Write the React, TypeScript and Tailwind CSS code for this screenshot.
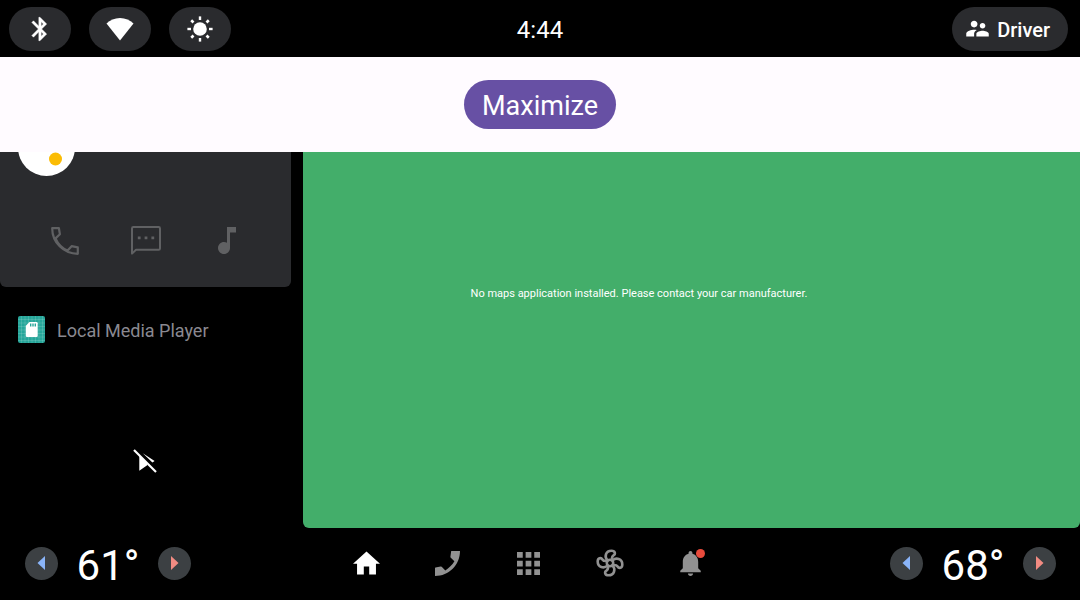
import type { ReactNode } from "react";

function StatusPill({ label, children }: { label: string; children: ReactNode }) {
  return (
    <button
      type="button"
      aria-label={label}
      className="flex h-11 w-[62px] items-center justify-center rounded-full bg-[#2a2b2e] pr-px"
    >
      {children}
    </button>
  );
}

function BluetoothIcon() {
  return (
    <svg viewBox="0 0 24 24" className="size-7" fill="currentColor" stroke="currentColor" strokeWidth=".4" aria-hidden="true">
      <path d="M17.71 7.71L12 2h-1v7.59L6.41 5 5 6.41 10.59 12 5 17.59 6.41 19 11 14.41V22h1l5.71-5.71-4.3-4.29 4.3-4.29zM13 5.83l1.88 1.88L13 9.59V5.83zm1.88 10.46L13 18.17v-3.76l1.88 1.88z" />
    </svg>
  );
}

function WifiIcon() {
  return (
    <svg viewBox="0 0 28 24" className="h-6 w-7" fill="currentColor" aria-hidden="true">
      <path d="M14 23.4 0.5 6.6C4 3.2 8.6 1 14 1s10 2.2 13.5 5.6z" />
    </svg>
  );
}

function SunIcon() {
  return (
    <svg viewBox="-14 -14 28 28" className="size-7" fill="currentColor" aria-hidden="true">
      <circle r="6.8" />
      {[0, 90, 180, 270].map((a) => (
        <rect key={a} x="-1.2" y="-12.6" width="2.4" height="3.6" transform={`rotate(${a})`} />
      ))}
      {[45, 135, 225, 315].map((a) => (
        <rect key={a} x="-1.3" y="-12.4" width="2.6" height="3.2" transform={`rotate(${a})`} />
      ))}
    </svg>
  );
}

function UsersIcon() {
  return (
    <svg viewBox="0 0 24 24" className="size-[27px]" fill="currentColor" aria-hidden="true">
      <path d="M16.5 12c1.38 0 2.49-1.12 2.49-2.5S17.88 7 16.5 7C15.12 7 14 8.12 14 9.5s1.12 2.5 2.5 2.5zM9 11c1.66 0 2.99-1.34 2.99-3S10.66 5 9 5C7.34 5 6 6.34 6 8s1.34 3 3 3zm7.5 3c-1.83 0-5.5.92-5.5 2.75V19h11v-2.25c0-1.83-3.67-2.75-5.5-2.75zM9 13c-2.33 0-7 1.17-7 3.5V19h7v-2.25c0-.85.33-2.34 2.37-3.47C10.5 13.1 9.66 13 9 13z" />
    </svg>
  );
}

function CallOutlineIcon() {
  return (
    <svg viewBox="0 0 28 28" className="size-7" fill="none" stroke="currentColor" strokeWidth="2.2" aria-hidden="true">
      <path strokeLinejoin="round" d="M1.2 1.2H7.9L8.9 7.2 4.5 11.4C7 17 11 21.2 16.6 23.6L20.6 19.2 26.800 20.4V26.800C12.6 26.800 1.2 15.4 1.2 1.2Z" />
    </svg>
  );
}

function MessageIcon() {
  return (
    <svg viewBox="0 0 30 30" className="size-[30px]" fill="none" stroke="currentColor" strokeWidth="2" aria-hidden="true">
      <path strokeLinejoin="round" d="M1 27.6V2.4Q1 1 2.4 1H27.6Q29 1 29 2.4V22.4Q29 23.8 27.6 23.8H5Z" />
      <path stroke="none" fill="currentColor" d="M6.8 10.4h2.8v2.8H6.8zM13.6 10.4h2.8v2.8h-2.8zM20.4 10.4h2.8v2.8h-2.8z" />
    </svg>
  );
}

function NoteIcon() {
  return (
    <svg viewBox="6 3 12 18" className="h-[27px] w-[18px]" fill="currentColor" aria-hidden="true">
      <path d="M12 3v10.55c-.59-.34-1.27-.55-2-.55-2.21 0-4 1.79-4 4s1.79 4 4 4 4-1.79 4-4V6.600h4V3h-6z" />
    </svg>
  );
}

function SdCardIcon() {
  return (
    <svg viewBox="0 0 27 27" className="size-[27px]" aria-hidden="true">
      <rect width="27" height="27" rx="2" fill="#26a69a" />
      <path
        d="M3.500 0v27M7 0v27M10.500 0v27M14 0v27M17.500 0v27M21 0v27M24.500 0v27M0 3.500h27M0 7h27M0 10.500h27M0 14h27M0 17.500h27M0 21h27M0 24.500h27"
        stroke="#fff"
        strokeOpacity=".2"
        strokeWidth=".7"
      />
      <path d="M11.500 6H18.500Q19.700 6 19.700 7.200V19.800Q19.700 21 18.500 21H9Q7.800 21 7.800 19.800V9.800Z" fill="#fff" />
      <path d="M12 7.400h1.400v3H12zM14.300 7.400h1.400v3h-1.400zM16.600 7.400H18v3h-1.400z" fill="#26a69a" />
    </svg>
  );
}

function PlayOffIcon() {
  return (
    <svg viewBox="0 0 24 24" className="size-6" fill="currentColor" aria-hidden="true">
      <path d="M6.300 7V21.800L14.200 16.200V14.500L6.300 6.600zM9.800 4.200 21.600 12 19.400 13.600Z" />
      <path d="M1 1 23 23" stroke="currentColor" strokeWidth="2.200" />
    </svg>
  );
}

function HomeIcon() {
  return (
    <svg viewBox="2 3 20 17" className="h-6 w-[27px]" fill="currentColor" aria-hidden="true">
      <path d="M10 20v-6h4v6h5v-8h3L12 3 2 12h3v8z" />
    </svg>
  );
}

function PhoneIcon() {
  return (
    <svg viewBox="0 0 25 25" className="size-[25px]" fill="currentColor" aria-hidden="true">
      <path d="M16.200 0H25C25 14 14 25 0 25V17Q0 16.600.5 16.400L5.600 15.400Q6.200 15.300 6.700 15.800L10.300 19.400C14 17.200 17.200 14 19.400 10.300L15.800 6.800Q15.300 6.300 15.400 5.700Z" />
    </svg>
  );
}

function AppsIcon() {
  return (
    <svg viewBox="4 4 16 16" className="size-[23px]" fill="currentColor" aria-hidden="true">
      <path d="M4 8h4V4H4v4zm6 12h4v-4h-4v4zm-6 0h4v-4H4v4zm0-6h4v-4H4v4zm6 0h4v-4h-4v4zm6-10v4h4V4h-4zm-6 4h4V4h-4v4zm6 6h4v-4h-4v4zm0 6h4v-4h-4v4z" />
    </svg>
  );
}

function FanIcon() {
  return (
    <svg viewBox="-14 -14 28 28" className="size-7" fill="none" stroke="currentColor" strokeWidth="2.600" aria-hidden="true">
      <circle r="3.200" />
      {[0, 90, 180, 270].map((a) => (
        <path
          key={a}
          transform={`rotate(${a})`}
          d="M-2.600 -2.600C-5.800 -6 -4.500 -12.300 1.500 -12.300C5.500 -12.300 5.600 -8.800 3.500 -7.600C1.800 -6.600 1.800 -5 2 -2.800"
        />
      ))}
    </svg>
  );
}

function BellIcon() {
  return (
    <svg viewBox="4 2.500 16 19.500" className="h-[25px] w-[21px]" fill="currentColor" aria-hidden="true">
      <path d="M12 22c1.100 0 2-.9 2-2h-4c0 1.100.89 2 2 2zm6-6v-5c0-3.070-1.640-5.640-4.500-6.320V4c0-.83-.67-1.500-1.500-1.500s-1.500.67-1.500 1.500v.68C7.630 5.360 6 7.920 6 11v5l-2 2v1h16v-1l-2-2z" />
    </svg>
  );
}

function TemperatureControl({ zone, value }: { zone: string; value: number }) {
  return (
    <div className="flex items-center" role="group" aria-label={`${zone} temperature`}>
      <button
        type="button"
        aria-label={`Lower ${zone} temperature`}
        className="flex size-[33px] items-center justify-center rounded-full bg-[#3c4043] pr-0.5 text-[#8ab4f8]"
      >
        <svg viewBox="0 0 8 14" className="h-3.5 w-2" fill="currentColor" aria-hidden="true">
          <path d="M8 0v14L.5 7z" />
        </svg>
      </button>
      <output className="w-[100px] pt-1.5 text-center text-[42px] leading-[50px]">{value}°</output>
      <button
        type="button"
        aria-label={`Raise ${zone} temperature`}
        className="flex size-[33px] items-center justify-center rounded-full bg-[#3c4043] text-[#f28b82]"
      >
        <svg viewBox="0 0 8 14" className="h-3.5 w-2" fill="currentColor" aria-hidden="true">
          <path d="M0 0v14l7.500-7z" />
        </svg>
      </button>
    </div>
  );
}

function NavButton({ label, active = false, children }: { label: string; active?: boolean; children: ReactNode }) {
  return (
    <button
      type="button"
      aria-label={label}
      className={`flex h-12 w-[81px] items-center justify-center ${active ? "text-white" : "text-[#919191]"}`}
    >
      {children}
    </button>
  );
}

export default function App() {
  return (
    <div className="flex min-h-screen flex-col bg-black font-['Roboto',sans-serif] text-white">
      <header className="grid h-[57px] grid-cols-[1fr_auto_1fr] items-center pr-3 pl-[9px]">
        <div className="flex gap-[18px]">
          <StatusPill label="Bluetooth"><BluetoothIcon /></StatusPill>
          <StatusPill label="Wi-Fi"><WifiIcon /></StatusPill>
          <StatusPill label="Brightness"><SunIcon /></StatusPill>
        </div>
        <time className="pt-0.5 pl-[3px] text-2xl">4:44</time>
        <button
          type="button"
          className="flex h-11 items-center gap-1.5 justify-self-end rounded-full bg-[#2a2b2e] pr-[18px] pl-3 text-xl font-medium"
        >
          <UsersIcon />
          <span className="pt-0.5">Driver</span>
        </button>
      </header>

      <section className="flex h-[95px] items-center justify-center bg-[#fffbff]">
        <button type="button" className="rounded-full bg-[#6750a4] px-[18px] pt-2 pb-1 text-[27px] leading-[37px]">
          Maximize
        </button>
      </section>

      <main className="flex flex-1 gap-3">
        <div className="flex w-[291px] shrink-0 flex-col gap-3">
          <section className="h-[135px] overflow-hidden rounded-b-md bg-[#2a2b2e]">
            <svg viewBox="0 0 57 24" className="ml-[18px] h-6 w-[57px]" aria-hidden="true">
              <circle cx="28.500" cy="-4.500" r="28.500" fill="#fff" />
              <circle cx="37.500" cy="7" r="6.500" fill="#fbbc04" />
            </svg>
            <div className="mt-[47px] flex justify-between px-6 text-[#606163]">
              <button type="button" aria-label="Call" className="flex h-9 w-[81px] items-center justify-center"><CallOutlineIcon /></button>
              <button type="button" aria-label="Message" className="flex h-9 w-[81px] items-center justify-center"><MessageIcon /></button>
              <button type="button" aria-label="Music" className="flex h-9 w-[81px] items-center justify-center pb-px"><NoteIcon /></button>
            </div>
          </section>
          <section className="flex flex-1 flex-col pt-[17px]">
            <div className="flex items-center gap-3 pl-[18px]">
              <SdCardIcon />
              <h2 className="pt-0.5 text-lg leading-[25px] text-[#8a8991]">Local Media Player</h2>
            </div>
            <button type="button" aria-label="Playback unavailable" className="mt-[106px] self-center pr-0.5"><PlayOffIcon /></button>
          </section>
        </div>
        <section className="flex flex-1 items-center justify-center rounded-b-md bg-[#43ae6a] pr-[105px] pb-[92px]">
          <p className="text-[11px] leading-4">No maps application installed. Please contact your car manufacturer.</p>
        </section>
      </main>

      <footer className="flex h-[72px] items-center justify-between pr-6 pb-0.5 pl-[25px]">
        <TemperatureControl zone="driver" value={61} />
        <nav aria-label="Main" className="mr-6 flex">
          <NavButton label="Home" active><HomeIcon /></NavButton>
          <NavButton label="Phone"><PhoneIcon /></NavButton>
          <NavButton label="Apps"><AppsIcon /></NavButton>
          <NavButton label="Climate"><FanIcon /></NavButton>
          <NavButton label="Notifications">
            <span className="relative">
              <BellIcon />
              <span className="absolute -top-0.5 -right-1 size-[9px] rounded-full bg-[#e94b3c]" />
            </span>
          </NavButton>
        </nav>
        <TemperatureControl zone="passenger" value={68} />
      </footer>
    </div>
  );
}
